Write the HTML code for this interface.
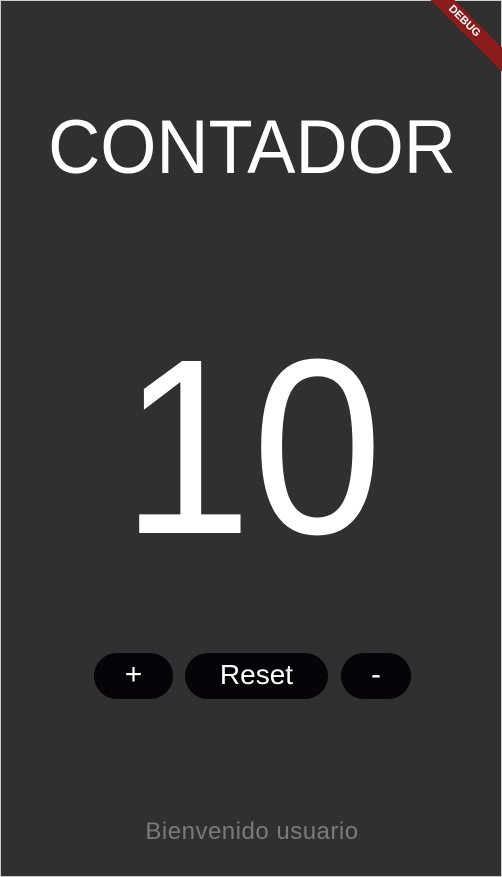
<!DOCTYPE html>
<html><head><style>
html,body{margin:0;padding:0;}
body{width:502px;height:877px;background:#303030;position:relative;overflow:hidden;font-family:"Liberation Sans",sans-serif;color:#fff;box-sizing:border-box;border:1px solid #ccc;}
.t{position:absolute;left:0;width:502px;text-align:center;white-space:nowrap;}
.btn{position:absolute;top:652px;height:46px;border-radius:23px;background:#060409;color:#fff;font-size:30px;line-height:44px;text-align:center;}
.rib{position:absolute;right:-38px;top:12px;width:150px;height:17px;background:#8b1c1c;transform:rotate(45deg);color:#fff;font-size:11px;font-weight:bold;text-align:center;line-height:17px;}
</style></head><body>
<div class="t" style="top:102px;font-size:76px;line-height:90px;transform:scaleX(0.95);">CONTADOR</div>
<div class="t" style="top:316px;font-size:250px;line-height:260px;transform:scaleX(0.94);">10</div>
<div class="btn" style="left:93px;width:79px;">+</div>
<div class="btn" style="left:184px;width:143px;font-size:28px;">Reset</div>
<div class="btn" style="left:340px;width:70px;">-</div>
<div class="t" style="top:816px;font-size:24px;line-height:30px;color:#7a7a7a;letter-spacing:0.5px;">Bienvenido usuario</div>
<div class="rib">DEBUG</div>
</body></html>
